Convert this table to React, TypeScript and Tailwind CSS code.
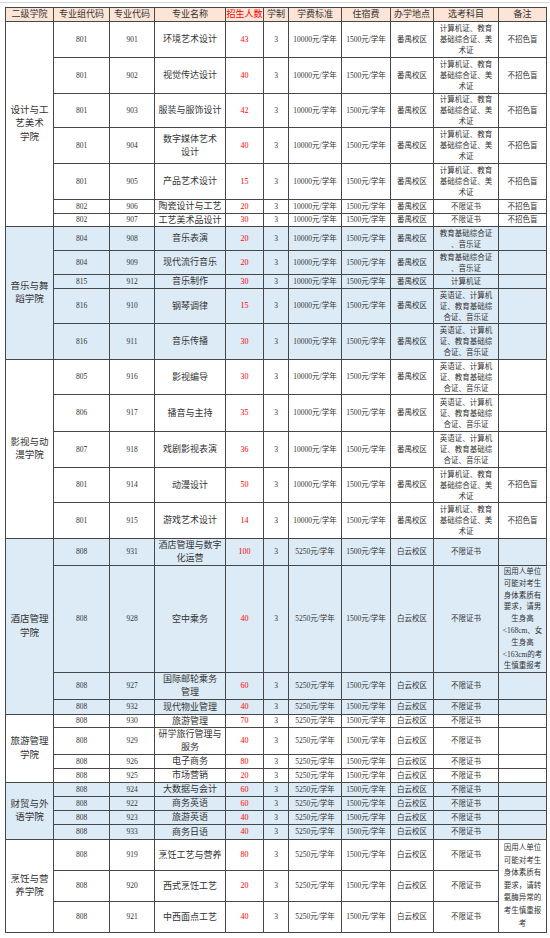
import React from 'react';

type Row = {
  h: string;
  g: string;
  c: string;
  name: string[];
  n: string;
  subj: string[];
  note: string[] | 'skip';
  noteSpan?: number;
  noteLead?: string;
};

type Group = {
  name: string[];
  blue: boolean;
  fee: string;
  loc: string;
  rows: Row[];
};

const CERT3 = ['计算机证、教育', '基础综合证、美', '术证'];
const CERT_MUSIC = ['英语证、计算机', '证、教育基础综', '合证、音乐证'];
const NONE = ['不限证书'];
const NOCB = ['不招色盲'];

const HIGH_NOTE = ['因用人单位', '可能对考生', '身体素质有', '要求，请男', '生身高', '<168cm、女', '生身高', '<163cm的考', '生慎重报考'];
const LIVER_NOTE = ['因用人单位', '可能对考生', '身体素质有', '要求，请转', '氨酶异常的', '考生慎重报', '考'];

const groups: Group[] = [
  {
    name: ['设计与工', '艺美术', '学院'],
    blue: false,
    fee: '10000元/学年',
    loc: '番禺校区',
    rows: [
      { h: 'h-[36px]', g: '801', c: '901', name: ['环境艺术设计'], n: '43', subj: CERT3, note: NOCB },
      { h: 'h-[36px]', g: '801', c: '902', name: ['视觉传达设计'], n: '40', subj: CERT3, note: NOCB },
      { h: 'h-[34px]', g: '801', c: '903', name: ['服装与服饰设计'], n: '42', subj: CERT3, note: NOCB },
      { h: 'h-[36px]', g: '801', c: '904', name: ['数字媒体艺术', '设计'], n: '40', subj: CERT3, note: NOCB },
      { h: 'h-[36px]', g: '801', c: '905', name: ['产品艺术设计'], n: '15', subj: CERT3, note: NOCB },
      { h: 'h-[14px]', g: '802', c: '906', name: ['陶瓷设计与工艺'], n: '20', subj: NONE, note: NOCB },
      { h: 'h-[13px]', g: '802', c: '907', name: ['工艺美术品设计'], n: '30', subj: NONE, note: NOCB },
    ],
  },
  {
    name: ['音乐与舞', '蹈学院'],
    blue: true,
    fee: '10000元/学年',
    loc: '番禺校区',
    rows: [
      { h: 'h-[24px]', g: '804', c: '908', name: ['音乐表演'], n: '20', subj: ['教育基础综合证', '、音乐证'], note: [] },
      { h: 'h-[24px]', g: '804', c: '909', name: ['现代流行音乐'], n: '20', subj: ['教育基础综合证', '、音乐证'], note: [] },
      { h: 'h-[14px]', g: '815', c: '912', name: ['音乐制作'], n: '30', subj: ['计算机证'], note: [] },
      { h: 'h-[35px]', g: '816', c: '910', name: ['钢琴调律'], n: '15', subj: CERT_MUSIC, note: [] },
      { h: 'h-[36px]', g: '816', c: '911', name: ['音乐传播'], n: '30', subj: CERT_MUSIC, note: [] },
    ],
  },
  {
    name: ['影视与动', '漫学院'],
    blue: false,
    fee: '10000元/学年',
    loc: '番禺校区',
    rows: [
      { h: 'h-[35px]', g: '805', c: '916', name: ['影视编导'], n: '30', subj: CERT_MUSIC, note: [] },
      { h: 'h-[37px]', g: '806', c: '917', name: ['播音与主持'], n: '35', subj: CERT_MUSIC, note: [] },
      { h: 'h-[36px]', g: '807', c: '918', name: ['戏剧影视表演'], n: '36', subj: CERT_MUSIC, note: [] },
      { h: 'h-[35px]', g: '801', c: '914', name: ['动漫设计'], n: '50', subj: CERT3, note: NOCB },
      { h: 'h-[36px]', g: '801', c: '915', name: ['游戏艺术设计'], n: '14', subj: CERT3, note: NOCB },
    ],
  },
  {
    name: ['酒店管理', '学院'],
    blue: true,
    fee: '5250元/学年',
    loc: '白云校区',
    rows: [
      { h: 'h-[26px]', g: '808', c: '931', name: ['酒店管理与数字', '化运营'], n: '100', subj: NONE, note: [] },
      { h: 'h-[107px]', g: '808', c: '928', name: ['空中乘务'], n: '40', subj: NONE, note: HIGH_NOTE, noteLead: 'leading-[11.8px]' },
      { h: 'h-[27px]', g: '808', c: '927', name: ['国际邮轮乘务', '管理'], n: '60', subj: NONE, note: [] },
      { h: 'h-[15px]', g: '808', c: '932', name: ['现代物业管理'], n: '40', subj: NONE, note: [] },
    ],
  },
  {
    name: ['旅游管理', '学院'],
    blue: false,
    fee: '5250元/学年',
    loc: '白云校区',
    rows: [
      { h: 'h-[13px]', g: '808', c: '930', name: ['旅游管理'], n: '70', subj: NONE, note: [] },
      { h: 'h-[27px]', g: '808', c: '929', name: ['研学旅行管理与', '服务'], n: '40', subj: NONE, note: [] },
      { h: 'h-[14px]', g: '808', c: '926', name: ['电子商务'], n: '80', subj: NONE, note: [] },
      { h: 'h-[14px]', g: '808', c: '925', name: ['市场营销'], n: '20', subj: NONE, note: [] },
    ],
  },
  {
    name: ['财贸与外', '语学院'],
    blue: true,
    fee: '5250元/学年',
    loc: '白云校区',
    rows: [
      { h: 'h-[14px]', g: '808', c: '924', name: ['大数据与会计'], n: '60', subj: NONE, note: [] },
      { h: 'h-[14px]', g: '808', c: '922', name: ['商务英语'], n: '60', subj: NONE, note: [] },
      { h: 'h-[14px]', g: '808', c: '923', name: ['旅游英语'], n: '40', subj: NONE, note: [] },
      { h: 'h-[15px]', g: '808', c: '933', name: ['商务日语'], n: '40', subj: NONE, note: [] },
    ],
  },
  {
    name: ['烹饪与营', '养学院'],
    blue: false,
    fee: '5250元/学年',
    loc: '白云校区',
    rows: [
      { h: 'h-[31px]', g: '808', c: '919', name: ['烹饪工艺与营养'], n: '80', subj: NONE, note: LIVER_NOTE, noteSpan: 3, noteLead: 'leading-[12.6px]' },
      { h: 'h-[31px]', g: '808', c: '920', name: ['西式烹饪工艺'], n: '20', subj: NONE, note: 'skip' },
      { h: 'h-[31px]', g: '808', c: '921', name: ['中西面点工艺'], n: '40', subj: NONE, note: 'skip' },
    ],
  },
];

const headers = ['二级学院', '专业组代码', '专业代码', '专业名称', '招生人数', '学制', '学费标准', '住宿费', '办学地点', '选考科目', '备注'];
const widths = ['w-[48px]', 'w-[56px]', 'w-[45px]', 'w-[71px]', 'w-[38px]', 'w-[25px]', 'w-[53px]', 'w-[49px]', 'w-[43px]', 'w-[65px]', 'w-[48px]'];

const cell = 'border border-[#474747] p-0 text-center align-middle overflow-hidden';

function Lines({ lines, lead }: { lines: string[]; lead: string }) {
  return (
    <div className={lead}>
      {lines.map((l, i) => (
        <div key={i} className="whitespace-nowrap">{l}</div>
      ))}
    </div>
  );
}

export default function App() {
  return (
    <div className="w-[550px] h-[938px] bg-white overflow-hidden text-[#333] font-['Liberation_Serif','Noto_Sans_CJK_SC',serif]">
      <div className="h-[2px]" />
      <div className="h-px bg-[#d6d6d6]" />
      <div className="pt-[4px] pl-[5px]">
        <table className="table-fixed border-collapse w-[541px]">
          <colgroup>
            {widths.map((w, i) => (
              <col key={i} className={w} />
            ))}
          </colgroup>
          <thead>
            <tr className="h-[14px] bg-[#fce4d6]">
              {headers.map((h, i) => (
                <th key={h} className={`${cell} text-[9px] leading-[11px] font-normal whitespace-nowrap ${i === 4 ? 'text-[#ff0000]' : ''}`}>
                  {h}
                </th>
              ))}
            </tr>
          </thead>
          <tbody>
            {groups.map((grp) =>
              grp.rows.map((r, ri) => (
                <tr key={r.c} className={`${r.h} ${grp.blue ? 'bg-[#ddebf7]' : 'bg-white'}`}>
                  {ri === 0 && (
                    <td rowSpan={grp.rows.length} className={`${cell} text-[9.5px]`}>
                      <Lines lines={grp.name} lead="leading-[13.5px]" />
                    </td>
                  )}
                  <td className={`${cell} text-[7.5px] leading-[10px]`}>{r.g}</td>
                  <td className={`${cell} text-[7.5px] leading-[10px]`}>{r.c}</td>
                  <td className={`${cell} text-[9px]`}>
                    <Lines lines={r.name} lead={r.name.length > 1 ? 'leading-[13px]' : 'leading-[11px]'} />
                  </td>
                  <td className={`${cell} text-[8px] leading-[10px] text-[#ff0000]`}>{r.n}</td>
                  <td className={`${cell} text-[7.5px] leading-[10px]`}>3</td>
                  <td className={`${cell} text-[7.5px] leading-[10px] whitespace-nowrap`}>{grp.fee}</td>
                  <td className={`${cell} text-[7.5px] leading-[10px] whitespace-nowrap`}>1500元/学年</td>
                  <td className={`${cell} text-[7.5px] leading-[10px] whitespace-nowrap`}>{grp.loc}</td>
                  <td className={`${cell} text-[7.5px]`}>
                    <Lines lines={r.subj} lead={r.subj.length > 1 ? 'leading-[11px]' : 'leading-[10px]'} />
                  </td>
                  {r.note !== 'skip' && (
                    <td rowSpan={r.noteSpan ?? 1} className={`${cell} text-[7.5px]`}>
                      <Lines lines={r.note} lead={r.noteLead ?? 'leading-[10px]'} />
                    </td>
                  )}
                </tr>
              ))
            )}
          </tbody>
        </table>
      </div>
      <div className="mt-[5px] h-px bg-[#8a8a8a]" />
    </div>
  );
}
